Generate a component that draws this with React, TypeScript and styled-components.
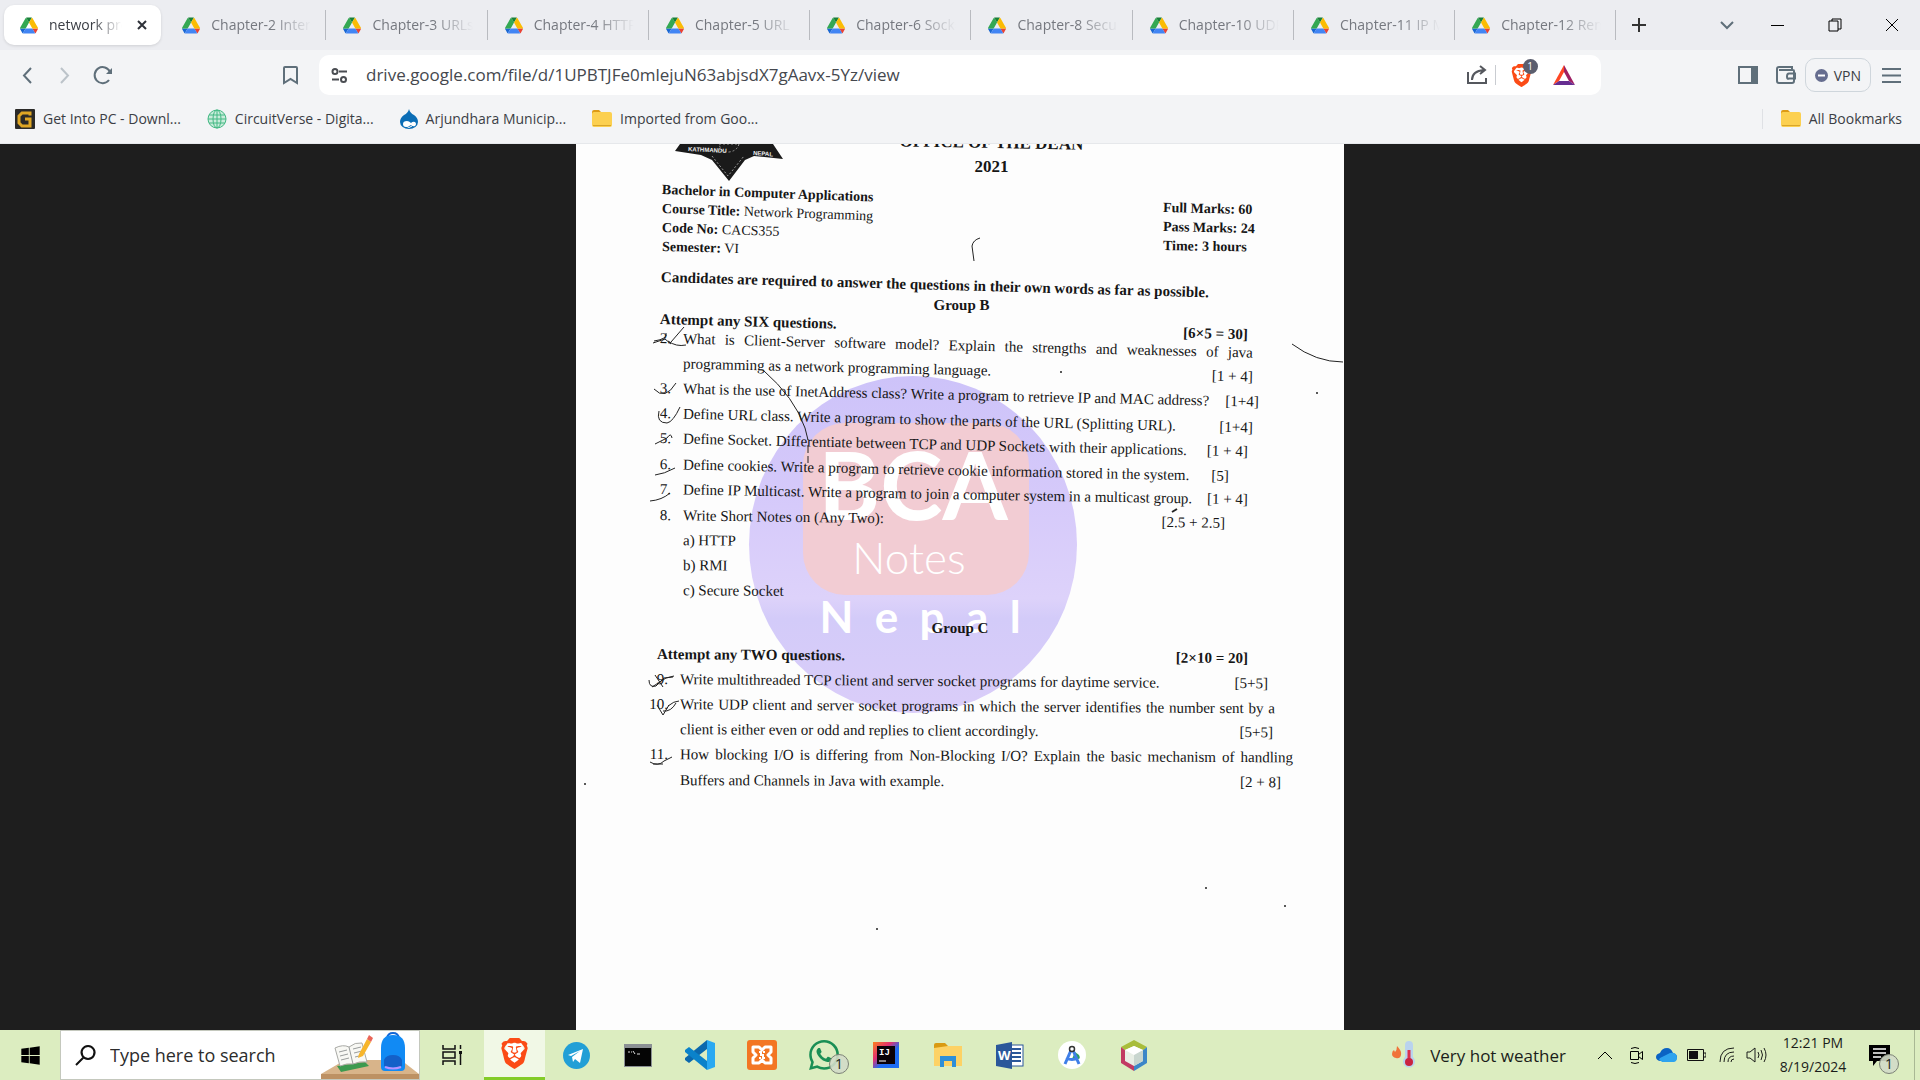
import React from "react";
import styled, { createGlobalStyle } from "styled-components";
import { FaWindows } from "react-icons/fa";
import { SiBrave, SiWhatsapp } from "react-icons/si";

const Global = createGlobalStyle`
  *, *::before, *::after { box-sizing: border-box; }
  html, body, #root { height: 100%; }
  body { margin: 0; font-family: "Open Sans", "Noto Sans", sans-serif; color: #3b3e45; }
  button, input { font: inherit; color: inherit; border: 0; background: none; padding: 0; margin: 0; outline: 0; }
  a { color: inherit; text-decoration: none; }
  svg { display: block; flex: none; }
`;

const Screen = styled.div`
  display: flex;
  flex-direction: column;
  height: 100vh;
  overflow: hidden;
`;

/* ---------- tab strip ---------- */

const TabStrip = styled.header`
  display: flex;
  align-items: center;
  height: 50px;
  flex: none;
  background: #ecedf1;
  padding-left: 4px;
`;

const TabList = styled.div`
  display: grid;
  grid-template-columns: repeat(10, minmax(0, 1fr));
  align-items: center;
  width: calc(84% + 3px);
`;

const Tab = styled.div<{ $active?: boolean }>`
  display: flex;
  align-items: center;
  min-width: 0;
  height: ${(p) => (p.$active ? 40 : 30)}px;
  padding-left: ${(p) => (p.$active ? 16 : 17)}px;
  padding-right: 14px;
  margin-right: ${(p) => (p.$active ? 4 : 0)}px;
  background: ${(p) => (p.$active ? "#fff" : "none")};
  border-radius: ${(p) => (p.$active ? 10 : 0)}px;
  box-shadow: ${(p) => (p.$active ? "0 1px 3px rgba(0,0,0,.12)" : "none")};
  border-right: ${(p) => (p.$active ? "0" : "1px solid #b9bbc0")};
  color: ${(p) => (p.$active ? "#3b3e45" : "#75787f")};
`;

const TabButton = styled.button`
  display: flex;
  align-items: center;
  gap: 11px;
  flex: 1 1 0;
  min-width: 0;
  font-size: 14px;
  line-height: 20px;
  text-align: left;
`;

const TabTitle = styled.span`
  flex: 1;
  min-width: 0;
  overflow: hidden;
  white-space: nowrap;
  mask-image: linear-gradient(to right, #000 60%, transparent 100%);
`;

const CloseTab = styled.button`
  display: flex;
  margin-left: 15px;
`;

const WindowButtons = styled.div`
  display: flex;
  align-items: center;
  flex: 1;
  justify-content: flex-end;
`;

const IconButton = styled.button<{ $w: number }>`
  display: flex;
  align-items: center;
  justify-content: center;
  flex: none;
  width: ${(p) => p.$w}px;
  height: 40px;
  color: #5f6f7a;
`;

/* ---------- toolbar ---------- */

const Toolbar = styled.nav`
  display: flex;
  align-items: center;
  height: 50px;
  flex: none;
  background: #f3f4f6;
  padding: 0 9px 0 8px;
`;

const BookmarkSlot = styled.div`
  display: flex;
  justify-content: flex-end;
  width: 197px;
  flex: none;
  padding-right: 10px;
`;

const AddressBar = styled.label`
  display: flex;
  align-items: center;
  flex: 1;
  min-width: 0;
  height: 40px;
  margin-right: 128px;
  padding: 0 26px 0 12px;
  background: #fff;
  border-radius: 10px;
`;

const AddressInput = styled.input`
  flex: 1;
  min-width: 0;
  margin-left: 18px;
  font-size: 17px;
  line-height: 24px;
  color: #45484e;
`;

const Rule = styled.span<{ $h: number; $c: string }>`
  width: 1px;
  height: ${(p) => p.$h}px;
  background: ${(p) => p.$c};
`;

const Shield = styled.button`
  position: relative;
  display: flex;
  margin: 0 20px 0 14px;
`;

const ShieldCount = styled.span`
  position: absolute;
  top: -5px;
  left: 13px;
  width: 15px;
  height: 15px;
  border-radius: 8px;
  background: #5b5e6e;
  color: #fff;
  font-size: 10px;
  line-height: 15px;
  text-align: center;
`;

const Vpn = styled.button`
  display: flex;
  align-items: center;
  gap: 6px;
  height: 34px;
  padding: 0 9px;
  border: 1px solid #cfd6dc;
  border-radius: 10px;
  font-size: 14px;
`;

/* ---------- bookmarks ---------- */

const BookmarkBar = styled.nav`
  display: flex;
  align-items: center;
  gap: 26px;
  height: 44px;
  flex: none;
  padding: 0 18px 6px 15px;
  background: #f3f4f6;
  border-bottom: 1px solid #e6e8eb;
`;

const Bookmark = styled.a`
  display: flex;
  align-items: center;
  gap: 8px;
  font-size: 14px;
  line-height: 20px;
  white-space: nowrap;
`;

const AllBookmarks = styled.div`
  display: flex;
  align-items: center;
  gap: 18px;
  margin-left: auto;
`;

/* ---------- document viewer ---------- */

const Viewer = styled.main`
  display: flex;
  justify-content: center;
  align-items: flex-start;
  flex: 1;
  min-height: 0;
  overflow: hidden;
  background: #1e1e1e;
`;

const Paper = styled.article`
  position: relative;
  isolation: isolate;
  width: 768px;
  max-width: 100%;
  min-height: calc(100% + 60px);
  margin-top: -60px;
  padding: 46px 51px 40px 76px;
  background: #fdfdfd;
  color: #161616;
  font-family: "Liberation Serif", serif;
  font-size: 15px;
  overflow: hidden;
`;

const Ink = styled.svg`
  position: absolute;
  top: 60px;
  left: 0;
`;

const Watermark = styled.div`
  position: absolute;
  z-index: -1;
  top: 292px;
  left: 173px;
  width: 328px;
  height: 337px;
  border-radius: 50%;
  padding-top: 47px;
  background: linear-gradient(180deg, #cdc3f9 0%, #d5c9fa 35%, #ddd2fa 66%, #d3cbf9 72%, #dacdf9 100%);
  color: #fff;
  font-family: Lato, sans-serif;
  text-align: center;
`;

const Plate = styled.div`
  width: 226px;
  height: 172px;
  margin: 0 auto 0 54px;
  border-radius: 42px;
  background: #f2ccd3;
`;

const PlateTitle = styled.div`
  padding-top: 16px;
  padding-right: 6px;
  font-size: 94px;
  line-height: 90px;
  font-weight: 700;
`;

const PlateSub = styled.div`
  padding-right: 14px;
  font-size: 44px;
  line-height: 56px;
  font-weight: 300;
`;

const PlateFoot = styled.div`
  padding-left: 14px;
  font-size: 44px;
  line-height: 42px;
  font-weight: 700;
  white-space: pre;
`;

const Title = styled.h1`
  margin: 0;
  padding-left: 38px;
  font-size: 17px;
  line-height: 22px;
  font-weight: 700;
  text-align: center;
`;

const Line = styled.div<{ $tilt?: number; $inset?: number; $lh?: number; $bold?: boolean; $center?: boolean }>`
  display: flex;
  justify-content: ${(p) => (p.$center ? "center" : "flex-start")};
  transform-origin: ${(p) => (p.$center ? "center" : "left center")};
  transform: rotate(${(p) => p.$tilt ?? 0}deg);
  padding-right: ${(p) => p.$inset ?? 0}px;
  line-height: ${(p) => p.$lh ?? 25}px;
  font-weight: ${(p) => (p.$bold ? 700 : 400)};
  white-space: nowrap;
`;

const Info = styled.section`
  display: flex;
  justify-content: space-between;
  padding: 2px 38px 0 10px;
  font-size: 14px;
`;

const MarksInfo = styled.div`
  padding-top: 18px;
`;

const Section = styled.section<{ $indent: number }>`
  padding-left: ${(p) => p.$indent}px;
`;

const Block = styled.div<{ $top?: number }>`
  padding-top: ${(p) => p.$top ?? 0}px;
`;

const GroupTitle = styled.h2<{ $top: number; $lh: number }>`
  margin: ${(p) => p.$top}px 0 0;
  padding-right: 27px;
  font-size: 15px;
  line-height: ${(p) => p.$lh}px;
  text-align: center;
`;

const Notice = styled.div`
  padding: 9px 0 0 9px;
`;

const Attempt = styled.div<{ $top: number }>`
  padding-top: ${(p) => p.$top}px;
  padding-left: 3px;
`;

const Num = styled.span`
  display: flex;
  justify-content: flex-end;
  width: 26px;
  padding-right: 12px;
  flex: none;
`;

const Body = styled.span<{ $fill?: boolean }>`
  flex: ${(p) => (p.$fill ? "1" : "none")};
  text-align-last: ${(p) => (p.$fill ? "justify" : "left")};
`;

const Marks = styled.span`
  margin-left: auto;
`;

/* ---------- taskbar ---------- */

const Taskbar = styled.footer`
  display: flex;
  align-items: stretch;
  height: 50px;
  flex: none;
  background: #dcedc0;
  color: #1b1d1a;
  padding-right: 5px;
`;

const TaskButton = styled.button<{ $w: number; $active?: boolean }>`
  position: relative;
  display: flex;
  align-items: center;
  justify-content: center;
  flex: none;
  width: ${(p) => p.$w}px;
  background: ${(p) => (p.$active ? "#f1f8e6" : "none")};
  border-bottom: ${(p) => (p.$active ? "3px solid #84cc29" : "0")};
`;

const SearchBox = styled.label`
  display: flex;
  align-items: center;
  width: 360px;
  flex: none;
  padding-left: 14px;
  background: #fff;
  border: 1px solid #c4c8bd;
`;

const SearchInput = styled.input`
  flex: 1;
  min-width: 0;
  margin-left: 13px;
  font-size: 18px;
  &::placeholder { color: #2c2c2c; opacity: 1; }
`;

const Count = styled.span<{ $x: number }>`
  position: absolute;
  left: ${(p) => p.$x}px;
  top: 24px;
  width: 20px;
  height: 20px;
  border: 1px solid #7c8276;
  border-radius: 10px;
  background: rgba(210, 218, 200, .9);
  font-size: 14px;
  line-height: 18px;
  text-align: center;
`;

const Tray = styled.div`
  display: flex;
  align-items: stretch;
  margin-left: auto;
`;

const Weather = styled.button`
  display: flex;
  align-items: center;
  gap: 14px;
  margin-right: 24px;
  font-size: 17px;
  white-space: nowrap;
`;

const Clock = styled.button`
  width: 86px;
  font-size: 14px;
  line-height: 24px;
  text-align: center;
  white-space: pre-line;
`;

const Edge = styled.span`
  width: 1px;
  margin-left: 12px;
  background: #a9b894;
`;

/* ---------- drawings ---------- */

const Drive = () => (
  <svg width="18" height="17" viewBox="0 0 87 78">
    <path d="M6.6 66.9l3.9 6.6c.8 1.4 2 2.500 3.300 3.300L27.500 53H0c0 1.500.4 3.100 1.200 4.500z" fill="#1967d2" />
    <path d="M43.600 25L29.900 1.200c-1.300.8-2.500 1.900-3.300 3.300L1.200 48.500A9 9 0 0 0 0 53h27.500z" fill="#34a853" />
    <path d="M73.500 76.800c1.300-.8 2.500-1.900 3.300-3.300l9.300-16c.8-1.400 1.200-3 1.200-4.500H59.800l5.800 11.500z" fill="#ea4335" />
    <path d="M43.600 25L57.400 1.200C56.100.4 54.500 0 52.900 0H34.400c-1.600 0-3.200.4-4.500 1.200z" fill="#188038" />
    <path d="M59.800 53H27.500L13.700 76.800c1.400.8 2.900 1.200 4.500 1.200h50.800c1.600 0 3.200-.4 4.500-1.200z" fill="#4285f4" />
    <path d="M73.400 26.500L60.700 4.500c-.8-1.400-2-2.500-3.300-3.300L43.600 25l16.200 28h27.400c0-1.500-.4-3.100-1.200-4.500z" fill="#fbbc04" />
  </svg>
);

const Stroke = ({ w, h, d, sw = 2, c = "currentColor" }: { w: number; h: number; d: string; sw?: number; c?: string }) => (
  <svg width={w} height={h} viewBox={`0 0 ${w} ${h}`} fill="none" stroke={c} strokeWidth={sw}>
    <path d={d} />
  </svg>
);

const Folder = () => (
  <svg width="20" height="17" viewBox="0 0 20 17">
    <path d="M0 2q0-2 2-2h5l2 2h9v4H0z" fill="#dd9b15" />
    <rect y="2" width="20" height="15" rx="2" fill="#fcd050" />
    <path d="M1 15.500h18" stroke="#d9a62a" />
  </svg>
);

const Droplet = () => (
  <svg width="18" height="20" viewBox="0 0 18 20">
    <path d="M9 0q1 4 5 6 4 3 4 7a9 7 0 0 1-18 0q0-4 4-7 4-2 5-6z" fill="#0b6db5" />
    <path d="M3 15q0-3 4-3 2 0 4 2 2-2 4-1 2 2 0 4-2 1-4-1-3 2-5 2-3 0-3-3z" fill="#fff" />
    <path d="M6 17q3 3 6 0" stroke="#fff" fill="none" />
  </svg>
);

const BraveLion = ({ size }: { size: number }) => (
  <svg width={size} height={size} viewBox="0 0 24 24">
    <path d="M6 4h12l1 10-7 7-7-7z" fill="#fff" />
    <SiBrave size={24} color="#fb4b16" />
  </svg>
);

const Netbeans = () => (
  <svg width="28" height="31" viewBox="0 0 28 31">
    <path d="M14 0l13 7-5 4-8-4-8 4-5-4z" fill="#a8bd3a" />
    <path d="M1 7l5 4v9l8 5v6L1 23z" fill="#c23a63" />
    <path d="M27 7l-5 4v9l-8 5v6l13-8z" fill="#3c87c8" />
    <path d="M14 6l9 4v11l-9 5-9-5V10z" fill="#e9efe6" />
    <path d="M14 14l9-4v11l-9 5z" fill="#c9d6cf" />
    <path d="M14 6l9 4-9 5-9-5z" fill="#fff" />
  </svg>
);

const StudyScene = () => (
  <svg width="98" height="48" viewBox="0 0 98 48">
    <path d="M0 43L24 29h56l18 14v5H0z" fill="#d8b48a" />
    <path d="M0 43h98v5H0z" fill="#bd9163" />
    <path d="M16 35l28-4 4 4-28 6z" fill="#3d9a4f" />
    <path d="M14 17q8-4 14-1 6-5 13-4l5 19q-8-1-14 2-6-1-13 2z" fill="#f8f8f4" stroke="#a9aaa6" />
    <path d="M28 16l4 17M18 21l8-2M19 25l8-2M20 29l8-2M32 18l8-2M33 22l8-2M34 26l8-2" stroke="#9a9d9c" fill="none" />
    <path d="M38 23l8-15 4 3-8 14-5 2z" fill="#f7b52b" />
    <path d="M46 8l2-4 4 3-2 4z" fill="#ea6557" />
    <path d="M66 7q1-5 6-5t6 5" fill="none" stroke="#1266d6" strokeWidth="2" />
    <path d="M60 36V17q0-13 12-13t12 13v19q0 4-4 4H64q-4 0-4-4z" fill="#118af4" />
    <path d="M63 35V29q2-5 9-5t9 5v6q-9 3-18 0z" fill="#1460c8" />
    <path d="M64 36q8 3 16 0" stroke="#b892ff" strokeWidth="2" fill="none" />
  </svg>
);

const Emblem = () => (
  <g>
    <path d="M680 144h93l10 15-29-3-9 4-16 21-17-21-11-5-26-4z" fill="#1a1a1a" />
    <path d="M719 144h20q-2 7-10 8t-10-8zM712 156l16 20 16-20" fill="none" stroke="#9a9a9a" strokeDasharray="2 2" />
    <text x="688" y="151" fontSize="6" fontWeight="700" fill="#eee" transform="rotate(3 688 151)">KATHMANDU</text>
    <text x="753" y="155" fontSize="6" fontWeight="700" fill="#eee" transform="rotate(4 753 155)">NEPAL</text>
  </g>
);

const PenMarks = () => (
  <Ink width="767" height="886" viewBox="576 144 767 886" fill="none" stroke="#222" strokeWidth="1" aria-hidden="true">
    <g stroke="none" fontFamily="Liberation Sans, sans-serif"><Emblem /></g>
    <path d="M980 238q-7 2-8 8l2 15" />
    <path d="M1292 344q24 18 51 18" />
    <path d="M763 370q32 28 42 58l3 12M808 445v8M808 456v7" />
    <path d="M653 343l12-4 6 5M654 341q14-2 12-8M671 342l13-15M668 341q8 6 18 4" />
    <path d="M654 389q11 12 22-6M659 411q-3 12 8 12 6-1 13-16" />
    <path d="M655 444l12-6q4-6 5 0M655 475q9-1 20-7M650 501q12-1 20-8" />
    <path d="M649 680q0 8 7 6l8-8 9-1M652 687l14-9 8-2 M655 675l8 12" />
    <path d="M657 705l6 10 6-10M663 711q8 1 13-8M668 706q6-5 11-5" />
    <path d="M650 762q8 5 14-1l8-4M653 764h10" />
    <path d="M1172 512l5-3" strokeWidth="2" />
    <g fill="#222" stroke="none">
      <circle cx="1317" cy="393" r="1" /><circle cx="1206" cy="888" r="1" /><circle cx="1285" cy="906" r="1" />
      <circle cx="877" cy="929" r="1" /><circle cx="585" cy="784" r="1" /><circle cx="1061" cy="372" r="1" />
    </g>
  </Ink>
);

/* ---------- content ---------- */

const tabs = [
  "network programming", "Chapter-2 Internet", "Chapter-3 URLs", "Chapter-4 HTTP", "Chapter-5 URL",
  "Chapter-6 Socket", "Chapter-8 Secure", "Chapter-10 UDP", "Chapter-11 IP Mul", "Chapter-12 Remote",
];

type Row = { n?: string; t: string; m?: string; inset?: number; tilt: number; fill?: boolean };

const groupB: Row[][] = [
  [
    { n: "2.", t: "What is Client-Server software model? Explain the strengths and weaknesses of java", inset: 40, tilt: 1.4, fill: true },
    { t: "programming as a network programming language.", m: "[1 + 4]", inset: 40, tilt: 1.3 },
    { n: "3.", t: "What is the use of InetAddress class? Write a program to retrieve IP and MAC address?", m: "[1+4]", inset: 34, tilt: 1.3 },
    { n: "4.", t: "Define URL class. Write a program to show the parts of the URL (Splitting URL).", m: "[1+4]", inset: 40, tilt: 1.4 },
    { n: "5.", t: "Define Socket. Differentiate between TCP and UDP Sockets with their applications.", m: "[1 + 4]", inset: 45, tilt: 1.3 },
  ],
  [
    { n: "6.", t: "Define cookies. Write a program to retrieve cookie information stored in the system.", m: "[5]", inset: 64, tilt: 1.2 },
    { n: "7.", t: "Define IP Multicast. Write a program to join a computer system in a multicast group.", m: "[1 + 4]", inset: 45, tilt: 1 },
  ],
  [
    { n: "8.", t: "Write Short Notes on (Any Two):", m: "[2.5 + 2.5]", inset: 68, tilt: 0.8 },
    { t: "a) HTTP", tilt: 0.4 },
    { t: "b) RMI", tilt: 0.4 },
    { t: "c) Secure Socket", tilt: 0.4 },
  ],
];

const groupC: Row[][] = [
  [
    { n: "9.", t: "Write multithreaded TCP client and server socket programs for daytime service.", m: "[5+5]", inset: 25, tilt: 0.4 },
    { n: "10.", t: "Write UDP client and server socket programs in which the server identifies the number sent by a", inset: 18, tilt: 0.4, fill: true },
    { t: "client is either even or odd and replies to client accordingly.", m: "[5+5]", inset: 20, tilt: 0.3 },
    { n: "11.", t: "How blocking I/O is differing from Non-Blocking I/O? Explain the basic mechanism of handling", tilt: 0.3, fill: true },
  ],
  [
    { t: "Buffers and Channels in Java with example.", m: "[2 + 8]", inset: 12, tilt: 0.2 },
  ],
];

const Questions = ({ blocks }: { blocks: Row[][] }) => (
  <>
    {blocks.map((rows, i) => (
      <Block key={i} $top={i ? 1 : 0}>
        {rows.map((r) => (
          <Line key={r.t} $tilt={r.tilt} $inset={r.inset}>
            <Num>{r.n}</Num>
            <Body $fill={r.fill}>{r.t}</Body>
            {r.m && <Marks>{r.m}</Marks>}
          </Line>
        ))}
      </Block>
    ))}
  </>
);

const ExamPaper = () => (
  <Paper>
    <Watermark>
      <Plate>
        <PlateTitle>BCA</PlateTitle>
        <PlateSub>Notes</PlateSub>
      </Plate>
      <PlateFoot>N  e  p  a  l</PlateFoot>
    </Watermark>
    <Title>
      <Line as="span" $center $lh={26} $tilt={1} $bold>OFFICE OF THE DEAN</Line>
      2021
    </Title>
    <Info>
      <div>
        <Line $lh={19} $tilt={2} $bold>Bachelor in Computer Applications</Line>
        <Line $lh={19} $tilt={2}><span><b>Course Title:</b> Network Programming</span></Line>
        <Line $lh={19} $tilt={2}><span><b>Code No:</b> CACS355</span></Line>
        <Line $lh={19} $tilt={1.5}><span><b>Semester:</b> VI</span></Line>
      </div>
      <MarksInfo>
        <Line $lh={19} $tilt={1.3} $bold>Full Marks: 60</Line>
        <Line $lh={19} $tilt={1.3} $bold>Pass Marks: 24</Line>
        <Line $lh={19} $tilt={1} $bold>Time: 3 hours</Line>
      </MarksInfo>
    </Info>
    <Notice>
      <Line $tilt={1.6} $bold>Candidates are required to answer the questions in their own words as far as possible.</Line>
    </Notice>
    <Section $indent={5}>
      <GroupTitle $top={8} $lh={14}>Group B</GroupTitle>
      <Attempt $top={0}>
        <Line $lh={14} $tilt={1.5} $inset={45} $bold>Attempt any SIX questions.<Marks>[6×5 = 30]</Marks></Line>
      </Attempt>
      <Questions blocks={groupB} />
    </Section>
    <Section $indent={2}>
      <GroupTitle $top={16} $lh={19}>Group C</GroupTitle>
      <Attempt $top={4}>
        <Line $tilt={0.4} $inset={45} $bold>Attempt any TWO questions.<Marks>[2×10 = 20]</Marks></Line>
      </Attempt>
      <Questions blocks={groupC} />
    </Section>
    <PenMarks />
  </Paper>
);

export default function App() {
  return (
    <Screen>
      <Global />
      <TabStrip>
        <TabList role="tablist">
          {tabs.map((t, i) => (
            <Tab key={t} $active={i === 0}>
              <TabButton role="tab" aria-selected={i === 0}><Drive /><TabTitle>{t}</TabTitle></TabButton>
              {i === 0 && <CloseTab aria-label="Close tab"><Stroke w={10} h={10} d="M1 1l8 8M9 1l-8 8" c="#2e3138" /></CloseTab>}
            </Tab>
          ))}
        </TabList>
        <IconButton $w={46} aria-label="New tab"><Stroke w={14} h={14} d="M7 0v14M0 7h14" c="#333" /></IconButton>
        <WindowButtons>
          <IconButton $w={44} aria-label="Search tabs"><Stroke w={14} h={9} d="M1 1l6 6 6-6" /></IconButton>
          <IconButton $w={57} aria-label="Minimize"><Stroke w={13} h={1} d="M0 .5h13" sw={1} c="#000" /></IconButton>
          <IconButton $w={57} aria-label="Restore"><Stroke w={14} h={14} d="M1 3h9v10H1zM4 3V1h9v10h-3" sw={1} c="#000" /></IconButton>
          <IconButton $w={57} aria-label="Close"><Stroke w={14} h={14} d="M1 1l12 12M13 1L1 13" sw={1} c="#000" /></IconButton>
        </WindowButtons>
      </TabStrip>

      <Toolbar>
        <IconButton $w={38} aria-label="Back"><Stroke w={10} h={17} d="M9 1L2 8.500 9 16" /></IconButton>
        <IconButton $w={38} aria-label="Forward"><Stroke w={10} h={17} d="M1 1l7 7.500L1 16" c="#bcc3c9" /></IconButton>
        <IconButton $w={38} aria-label="Reload">
          <svg width="20" height="20" viewBox="0 0 20 20" fill="none" stroke="currentColor" strokeWidth="2">
            <path d="M16 15a8 8 0 1 1 1-8" /><path d="M19 3v6h-6z" fill="currentColor" stroke="none" />
          </svg>
        </IconButton>
        <BookmarkSlot>
          <IconButton $w={38} aria-label="Bookmark this tab"><Stroke w={15} h={19} d="M1 2q0-1 1-1h11q1 0 1 1v15l-6.500-4L1 17z" /></IconButton>
        </BookmarkSlot>
        <AddressBar>
          <svg width="17" height="15" viewBox="0 0 17 15" fill="none" stroke="#4a4d52" strokeWidth="2">
            <circle cx="4" cy="3.500" r="2.500" /><path d="M8 3.500h8M1 11.500h7" /><circle cx="12.500" cy="11.500" r="2.500" />
          </svg>
          <AddressInput aria-label="Address" readOnly value="drive.google.com/file/d/1UPBTJFe0mlejuN63abjsdX7gAavx-5Yz/view" />
          <IconButton $w={36} aria-label="Share"><Stroke w={20} h={20} d="M1 7v11h18v-5M5 15q0-9 12-10M13 1l5 4-5 4" c="#55585e" /></IconButton>
          <Rule $h={20} $c="#c9ccd1" />
          <Shield aria-label="Brave Shields"><BraveLion size={23} /><ShieldCount>1</ShieldCount></Shield>
          <svg width="22" height="20" viewBox="0 0 22 20">
            <path d="M11 0L0 20l6-4 5-9z" fill="#ff4724" /><path d="M11 0l11 20-6-4-5-9z" fill="#9e1f63" /><path d="M0 20h22l-6-4H6z" fill="#662d91" />
          </svg>
        </AddressBar>
        <IconButton $w={38} aria-label="Sidebar">
          <svg width="20" height="18" viewBox="0 0 20 18"><rect x="1" y="1" width="18" height="16" fill="none" stroke="#5f6f7a" strokeWidth="2" /><path d="M13 1h6v16h-6z" fill="#5f6f7a" /></svg>
        </IconButton>
        <IconButton $w={38} aria-label="Wallet"><Stroke w={20} h={18} d="M16 4V1H3Q1 1 1 3v12q0 2 2 2h13q2 0 2-2V5q0-1-1-1H3M19 7.500h-6q-2 0-2 3t2 2h6z" /></IconButton>
        <Vpn>
          <svg width="13" height="13"><circle cx="6.500" cy="6.500" r="6.500" fill="#666d8f" /><path d="M3 6.500h7" stroke="#fff" strokeWidth="2" /></svg>
          VPN
        </Vpn>
        <IconButton $w={40} aria-label="Menu"><Stroke w={19} h={15} d="M0 1h19M0 7.500h19M0 14h19" /></IconButton>
      </Toolbar>

      <BookmarkBar>
        <Bookmark href="#">
          <svg width="20" height="20" viewBox="0 0 20 20"><rect width="20" height="20" rx="1" fill="#2b2a28" /><path d="M15 6.500V4H7L4 7v7l3 3h8v-7h-5" fill="none" stroke="#dfa624" strokeWidth="3" /></svg>
          Get Into PC - Downl...
        </Bookmark>
        <Bookmark href="#">
          <svg width="20" height="20" viewBox="0 0 20 20" fill="none" stroke="#42b883"><circle cx="10" cy="10" r="9" fill="#c9ecdb" /><ellipse cx="10" cy="10" rx="4" ry="9" /><path d="M10 1v18M1 10h18M2 6h16M2 14h16" /></svg>
          CircuitVerse - Digita...
        </Bookmark>
        <Bookmark href="#"><Droplet />Arjundhara Municip...</Bookmark>
        <Bookmark href="#"><Folder />Imported from Goo...</Bookmark>
        <AllBookmarks>
          <Rule $h={20} $c="#dfe1e5" />
          <Bookmark href="#"><Folder />All Bookmarks</Bookmark>
        </AllBookmarks>
      </BookmarkBar>

      <Viewer><ExamPaper /></Viewer>

      <Taskbar>
        <TaskButton $w={60} aria-label="Start"><FaWindows size={21} color="#000" /></TaskButton>
        <SearchBox>
          <Stroke w={22} h={21} d="M8 13L1 20M13 1a6.500 6.500 0 1 0 .1 0z" c="#111" />
          <SearchInput aria-label="Search" placeholder="Type here to search" />
          <StudyScene />
        </SearchBox>
        <TaskButton $w={64} aria-label="Task view">
          <svg width="21" height="20" viewBox="0 0 21 20" fill="none" stroke="#111" strokeWidth="1.500"><path d="M1 0v4h12V0M1 20v-4h12v4M1 7h12v6H1zM18.500 0v4M18.500 9v11" /><path d="M17 6h3v3h-3z" fill="#111" stroke="none" /></svg>
        </TaskButton>
        <TaskButton $w={61} $active aria-label="Brave"><BraveLion size={31} /></TaskButton>
        <TaskButton $w={62} aria-label="Telegram">
          <svg width="27" height="27" viewBox="0 0 27 27"><circle cx="13.500" cy="13.500" r="13.500" fill="#229fd6" /><path d="M5 13l15-6-3 14-5-4-2 3-1-5 8-6-9 5z" fill="#fff" /></svg>
        </TaskButton>
        <TaskButton $w={62} aria-label="Command Prompt">
          <svg width="28" height="23" viewBox="0 0 28 23"><rect width="28" height="23" fill="#8b9094" /><path d="M1 4h26v18H1z" fill="#050505" /><path d="M4 8h2M7 8h1M9 7l2 3M13 10h3" stroke="#ddd" /></svg>
        </TaskButton>
        <TaskButton $w={62} aria-label="Visual Studio Code">
          <svg width="30" height="30" viewBox="0 0 30 30"><path d="M22 0l8 3v24l-8 3z" fill="#29a9f2" /><path d="M22 0v9L4 23l-4-3v-2z" fill="#0b68ad" /><path d="M22 30v-9L4 7 0 10v2z" fill="#0a82ca" /></svg>
        </TaskButton>
        <TaskButton $w={62} aria-label="XAMPP">
          <svg width="30" height="30" viewBox="0 0 30 30"><rect width="30" height="30" rx="3" fill="#f37623" /><path d="M9 15L6 12V7h6l3 3 3-3h6v5l-3 3 3 3v5h-6l-3-3-3 3H6v-5z" fill="none" stroke="#fff" strokeWidth="3" strokeLinejoin="round" /><path d="M12 12h2v3h2v3h2M18 12h-2M12 18h2" stroke="#fff" strokeWidth="2" fill="none" /></svg>
        </TaskButton>
        <TaskButton $w={62} aria-label="WhatsApp"><SiWhatsapp size={30} color="#1a8f55" /><Count $x={36}>1</Count></TaskButton>
        <TaskButton $w={62} aria-label="IntelliJ IDEA">
          <svg width="26" height="26" viewBox="0 0 26 26"><defs><linearGradient id="ij" x1="0" y1="0" x2="1" y2="1"><stop offset="0" stopColor="#fc801d" /><stop offset=".35" stopColor="#e3306f" /><stop offset=".6" stopColor="#1d6df3" /></linearGradient></defs><rect width="26" height="26" fill="url(#ij)" /><rect x="4" y="4" width="18" height="18" fill="#0b0208" /><text x="6" y="13" fontSize="9" fontWeight="700" fill="#fff" fontFamily="Liberation Mono, monospace">IJ</text><path d="M6 19h7" stroke="#fff" /></svg>
        </TaskButton>
        <TaskButton $w={62} aria-label="File Explorer">
          <svg width="28" height="24" viewBox="0 0 28 24"><path d="M0 2q0-2 2-2h9l3 3v4H0z" fill="#d99a12" /><path d="M0 5l14-2h14v20H0z" fill="#fdd265" /><path d="M6 24V13h16v11h-4v-6h-8v6z" fill="#2f8fd8" /></svg>
        </TaskButton>
        <TaskButton $w={62} aria-label="Word">
          <svg width="28" height="27" viewBox="0 0 28 27"><rect x="13" y="3" width="14" height="21" fill="#fff" stroke="#2b579a" /><path d="M15 7h10M15 11h10M15 15h10M15 19h10" stroke="#2b579a" strokeWidth="2" /><path d="M0 3l16-3v27L0 24z" fill="#2b579a" /><text x="2" y="18" fontSize="13" fontWeight="700" fill="#fff" fontFamily="Open Sans, sans-serif">W</text></svg>
        </TaskButton>
        <TaskButton $w={62} aria-label="Android Studio">
          <svg width="28" height="28" viewBox="0 0 28 28"><circle cx="14" cy="14" r="14" fill="#fff" /><path d="M14 18h6q3 0 1-4l-4-3z" fill="#2d9d62" /><path d="M14 7L7 23M14 7l7 16M8 17q6 3 12 0" stroke="#3f7fe8" strokeWidth="3" fill="none" /><circle cx="14" cy="8" r="2.500" fill="#fff" stroke="#333" strokeWidth="1.500" /></svg>
        </TaskButton>
        <TaskButton $w={62} aria-label="NetBeans"><Netbeans /></TaskButton>

        <Tray>
          <Weather>
            <svg width="24" height="28" viewBox="0 0 24 28"><path d="M5 5q5 5 4 9t-5 3-4-4q0-3 2-4l1 2q2-2 2-6z" fill="#f0733a" /><path d="M13 4a4 4 0 0 1 8 0v12a6 6 0 1 1-8 0z" fill="#b9d3ee" /><path d="M17 9v11" stroke="#dc2f4c" strokeWidth="3" /><circle cx="17" cy="21" r="4" fill="#c92340" /></svg>
            Very hot weather
          </Weather>
          <TaskButton $w={30} aria-label="Show hidden icons"><Stroke w={16} h={9} d="M1 8l7-7 7 7" sw={1} c="#000" /></TaskButton>
          <TaskButton $w={31} aria-label="Meet Now"><Stroke w={16} h={18} d="M2.500 5.500h8v8h-8zM10.500 8.500l4-3v8l-4-3M3 2.500q4-2 8 0M3 16.500q4 2 8 0" sw={1} c="#000" /></TaskButton>
          <TaskButton $w={30} aria-label="OneDrive">
            <svg width="21" height="14" viewBox="0 0 21 14"><path d="M4 13Q0 12 0 9t4-4q2-5 7-5 4 0 6 5 4 1 4 4t-3 4z" fill="#0a63c4" /><path d="M5 13Q2 12 4 10l10-5q7-1 7 5 0 3-3 4H6z" fill="#2ea3ee" /></svg>
          </TaskButton>
          <TaskButton $w={30} aria-label="Battery"><svg width="19" height="12"><path d="M.5.5h16v11H.5zM17 4h2v4h-2" fill="none" stroke="#111" /><path d="M2 2h9v8H2z" fill="#111" /></svg></TaskButton>
          <TaskButton $w={31} aria-label="Network"><Stroke w={16} h={16} d="M1 15Q1 1 15 1M5 15Q5 5 15 5M9 15q0-6 6-6M12 15q0-3 3-3" sw={1} /></TaskButton>
          <TaskButton $w={28} aria-label="Volume"><Stroke w={21} h={16} d="M1 5h3l5-4v14l-5-4H1zM12 5q2 3 0 6M15 3q3 5 0 10M18 1q4 7 0 14" sw={1} /></TaskButton>
          <Clock>{"12:21 PM\n8/19/2024"}</Clock>
          <TaskButton $w={46} aria-label="Notifications">
            <svg width="21" height="21" viewBox="0 0 21 21"><path d="M0 0h21v16H8l-4 5v-5H0z" fill="#000" /><path d="M4 4h13M4 8h13M4 12h8" stroke="#fff" strokeWidth="1.500" /></svg>
            <Count $x={23}>1</Count>
          </TaskButton>
          <Edge />
        </Tray>
      </Taskbar>
    </Screen>
  );
}
